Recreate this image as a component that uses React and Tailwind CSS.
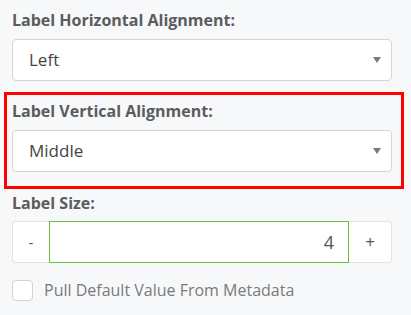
const font = { fontFamily: '"Open Sans", "Noto Sans", sans-serif' };

const Caret = () => (
  <svg width="8" height="6" viewBox="0 0 8 6" className="absolute right-[10px] top-1/2 -translate-y-1/2">
    <path d="M0 0h8L4 6z" fill="#7a7a7a" />
  </svg>
);

const Select = ({ value }) => (
  <div className="relative h-[42px] w-[380px] rounded-[4px] border border-[#d4d4d4] bg-white pl-[16px] flex items-center text-[17px] text-[#444]">
    {value}
    <Caret />
  </div>
);

const Label = ({ children }) => (
  <div className="text-[16px] font-bold text-[#5c5c5c] leading-[20px]">{children}</div>
);

export default function App() {
  return (
    <div className="w-[411px] h-[315px] bg-[#f7f8fa] pt-[10px]" style={font}>
      <div className="pl-[12px]">
        <Label>Label Horizontal Alignment:</Label>
        <div className="mt-[9px]">
          <Select value="Left" />
        </div>
      </div>
      <div className="ml-[4px] mt-[11px] w-[400px] h-[97px] border-[3px] border-[#ff0000] pl-[5px] pt-[6px]">
        <Label>Label Vertical Alignment:</Label>
        <div className="mt-[9px]">
          <Select value="Middle" />
        </div>
      </div>
      <div className="pl-[12px] mt-[4px]">
        <Label>Label Size:</Label>
        <div className="mt-[8px] flex h-[42px] w-[380px]">
          <button className="w-[37px] h-full rounded-l-[4px] border border-r-0 border-[#e3e3e3] bg-white text-[#555] text-[15px]">-</button>
          <div className="flex-1 h-full border border-[#66c23a] bg-white flex items-center justify-end pr-[14px] text-[18px] text-[#555]">4</div>
          <button className="w-[43px] h-full rounded-r-[4px] border border-l-0 border-[#e3e3e3] bg-white text-[#555] text-[17px]">+</button>
        </div>
        <label className="mt-[15px] flex items-center gap-[11px]">
          <span className="w-[21px] h-[21px] rounded-[4px] border border-[#d4d4d4] bg-white" />
          <span className="text-[16px] text-[#7a7a7a]">Pull Default Value From Metadata</span>
        </label>
      </div>
    </div>
  );
}
